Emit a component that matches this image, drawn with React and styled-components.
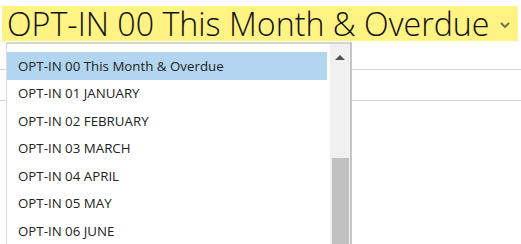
import styled, { createGlobalStyle } from "styled-components";

const options = [
  "OPT-IN 00 This Month & Overdue",
  "OPT-IN 01 JANUARY",
  "OPT-IN 02 FEBRUARY",
  "OPT-IN 03 MARCH",
  "OPT-IN 04 APRIL",
  "OPT-IN 05 MAY",
  "OPT-IN 06 JUNE",
];

export default function App() {
  return (
    <Page>
      <GlobalStyle />
      <Picker>
        <PickerLabel>{options[0]}</PickerLabel>
        <Chevron viewBox="0 0 10 6">
          <path d="M1 1 L5 5 L9 1" fill="none" stroke="#6f6b52" strokeWidth="1.8" />
        </Chevron>
      </Picker>

      <Body>
        <TableRow $h={27} />
        <TableRow $h={30} />

        <Dropdown>
          <List>
            {options.map((o, i) => (
              <Item key={o} $selected={i === 0}>{o}</Item>
            ))}
          </List>
          <Scrollbar>
            <UpArrow />
            <Thumb />
          </Scrollbar>
        </Dropdown>
      </Body>
    </Page>
  );
}

const GlobalStyle = createGlobalStyle`
body {
  margin: 0;
  background: #fff;
  overflow: hidden;
  font-family: "Open Sans", "Noto Sans", sans-serif;
}
`

const Page = styled.div`
width: 521px;
height: 244px;
overflow: hidden;
padding-top: 6px;
box-sizing: border-box;
`

const Picker = styled.div`
margin: 0 3px 0 2px;
height: 35px;
background: #fff384;
display: flex;
align-items: center;
padding: 0 8px 0 5px;
box-sizing: border-box;
`

const PickerLabel = styled.div`
flex: 1;
color: #111;
font-size: 32.2px;
font-weight: 300;
line-height: 35px;
white-space: nowrap;
`

const Chevron = styled.svg`
width: 10px;
height: 6px;
margin-top: 2px;
`

const Body = styled.div`
position: relative;
padding-top: 1px;
`

const TableRow = styled.div`
height: ${(p) => p.$h}px;
border-bottom: 1px solid #d4d4d4;
`

const Dropdown = styled.div`
position: absolute;
top: 1px;
left: 6px;
width: 343px;
height: 220px;
display: flex;
background: #fff;
border-top: 2px solid #d4d4d4;
border-left: 1px solid #dcdcdc;
border-right: 2px solid #c6c6c6;
`

const List = styled.div`
flex: 1;
padding: 8px 3px 0 0;
overflow: hidden;
`

const Item = styled.div`
height: 27.5px;
display: flex;
align-items: center;
padding-left: 11px;
color: #222;
font-size: 13.3px;
white-space: nowrap;
background: ${(p) => (p.$selected ? "#b2d6ef" : "transparent")};
`

const Scrollbar = styled.div`
width: 20px;
background: #f0f0f0;
position: relative;
`

const UpArrow = styled.div`
margin: 11px auto 0;
width: 0;
height: 0;
border-left: 5px solid transparent;
border-right: 5px solid transparent;
border-bottom: 5px solid #505050;
`

const Thumb = styled.div`
position: absolute;
top: 114px;
left: 2px;
width: 17px;
height: 120px;
background: #c1c1c1;
`
